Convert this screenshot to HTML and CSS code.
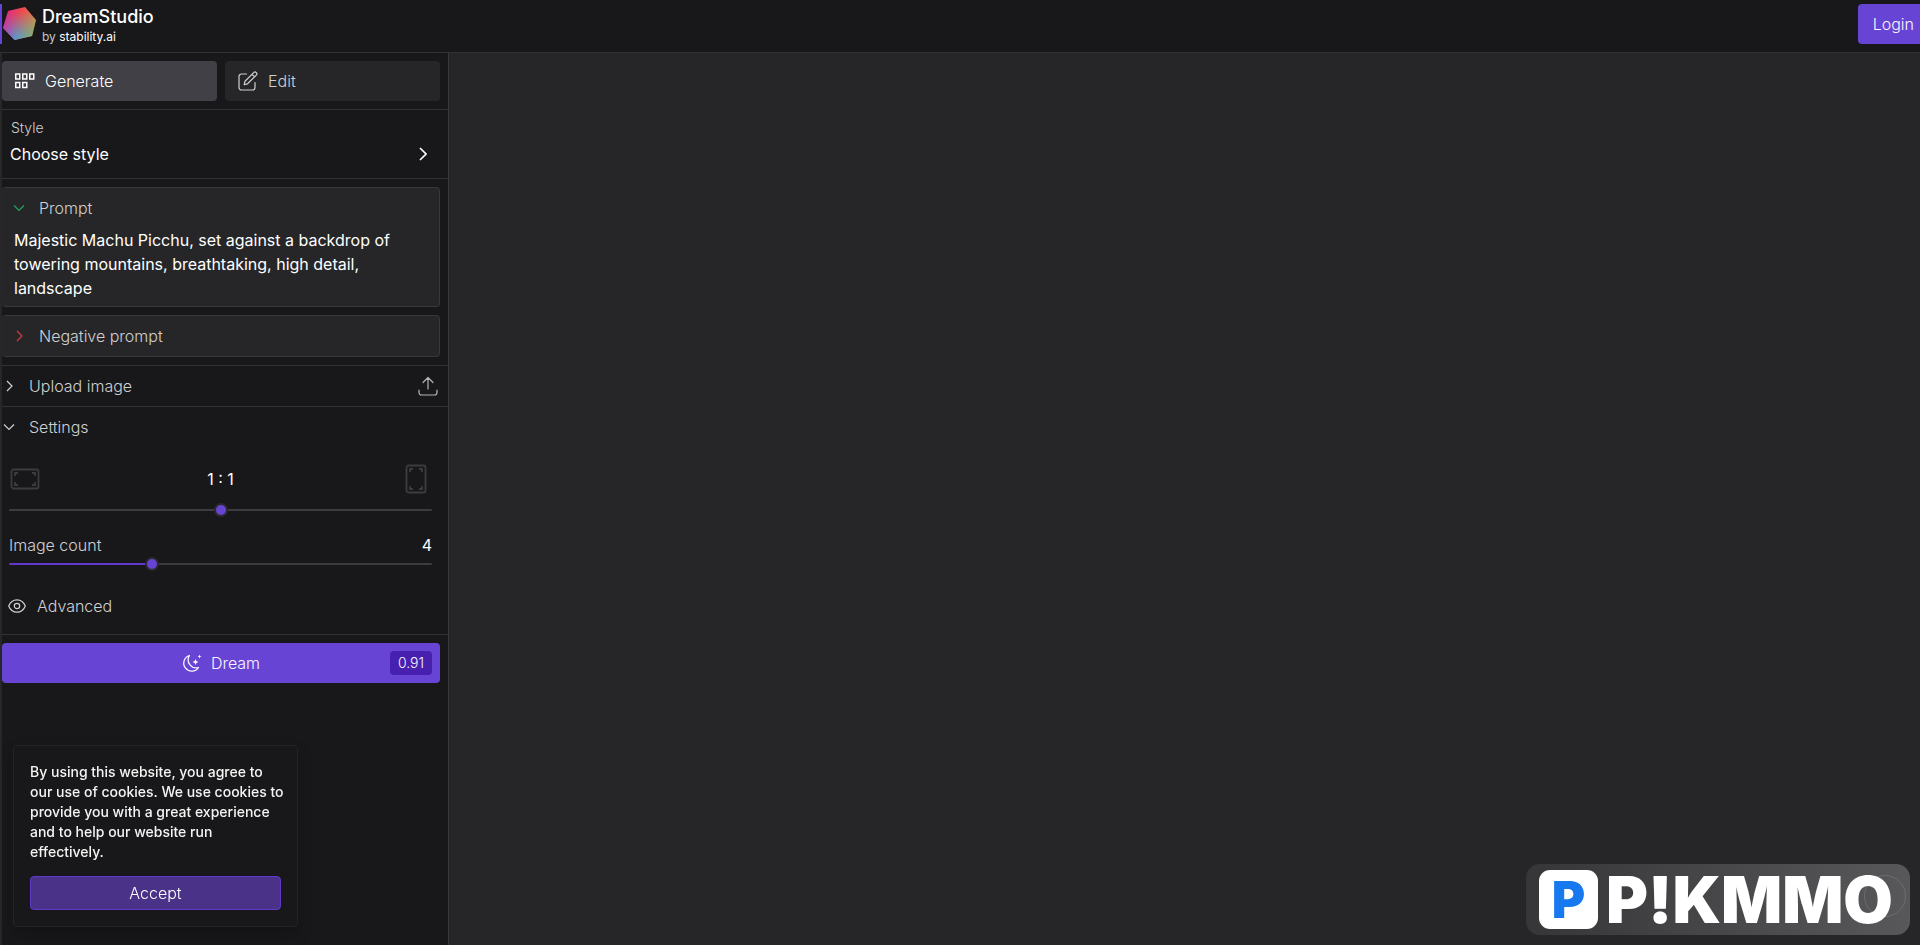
FILE: index.html
```html
<!doctype html>
<html lang="en">
  <head>
    <meta charset="UTF-8" />
    <meta name="viewport" content="width=device-width, initial-scale=1.0" />
    <title>DreamStudio</title>
    <link rel="stylesheet" href="styles.css">
  </head>
  <body>
    <header class="topbar">
      <span class="topbar-accent"></span>
      <a class="brand" href="#">
        <svg class="brand-logo" viewBox="0 0 34 34" aria-hidden="true">
          <defs>
            <linearGradient id="warm" x1="0" y1="0.2" x2="1" y2="0.5">
              <stop offset="0" stop-color="#d8288c" />
              <stop offset="0.5" stop-color="#ee4a4e" />
              <stop offset="1" stop-color="#d9884a" />
            </linearGradient>
            <linearGradient id="cool" x1="0" y1="0.6" x2="1" y2="0.7">
              <stop offset="0" stop-color="#9a48d8" />
              <stop offset="0.4" stop-color="#5c94cc" />
              <stop offset="1" stop-color="#86b264" />
            </linearGradient>
            <linearGradient id="fade" x1="0.45" y1="0" x2="0.55" y2="1">
              <stop offset="0.15" stop-color="#fff" stop-opacity="0" />
              <stop offset="0.9" stop-color="#fff" />
            </linearGradient>
            <mask id="lower">
              <rect width="34" height="34" fill="url(#fade)" />
            </mask>
          </defs>
          <path fill="url(#warm)" d="M6 4 23 0 34 13 30 29 12.500 33 1 21z" />
          <path fill="url(#cool)" mask="url(#lower)" d="M6 4 23 0 34 13 30 29 12.500 33 1 21z" />
        </svg>
        <span class="brand-text">
          <span class="brand-name">DreamStudio</span>
          <span class="brand-by">by <b>stability.ai</b></span>
        </span>
      </a>
      <button class="login" type="button">Login</button>
    </header>

    <div class="layout">
      <aside class="sidebar">
        <nav class="tabs">
          <button class="tab active" type="button">
            <svg width="20" height="16" viewBox="0 0 20 16" fill="none" stroke="currentColor" stroke-width="1.500">
              <rect x="0.750" y="1" width="4" height="5" />
              <rect x="7.750" y="1" width="4" height="5" />
              <rect x="14.750" y="1" width="4" height="5" />
              <rect x="0.750" y="9.500" width="4" height="5" />
              <rect x="7.750" y="9.500" width="4" height="5" />
            </svg>
            Generate
          </button>
          <button class="tab" type="button">
            <svg width="20" height="20" viewBox="0 0 20 20" fill="none" stroke="currentColor" stroke-width="1.200" stroke-linecap="round" stroke-linejoin="round">
              <path d="M8.500 3H3.500A2.500 2.500 0 0 0 1 5.500v11A2.500 2.500 0 0 0 3.500 19h11a2.500 2.500 0 0 0 2.500-2.500v-5" />
              <path d="M7 10.200 15.700 1.600a1.700 1.700 0 0 1 2.600 2.600L9.500 12.800 6.200 13.700zM14 3.300l2.600 2.600" />
            </svg>
            Edit
          </button>
        </nav>

        <button class="style-picker" type="button">
          <span class="style-label">Style</span>
          <span class="style-value">Choose style
            <svg width="8" height="14" viewBox="0 0 8 14" fill="none" stroke="currentColor" stroke-width="1.600"><path d="M1 1l6 6-6 6" /></svg>
          </span>
        </button>

        <section class="prompts">
          <div class="card">
            <button class="card-head" type="button">
              <svg class="green" width="12" height="12" viewBox="0 0 12 12" fill="none" stroke="currentColor" stroke-width="1.200"><path d="M1 3.500l5 5 5-5" /></svg>
              <span id="prompt-label">Prompt</span>
            </button>
            <textarea rows="3" aria-labelledby="prompt-label">Majestic Machu Picchu, set against a backdrop of towering mountains, breathtaking, high detail, landscape</textarea>
          </div>
          <div class="card">
            <button class="card-head" type="button">
              <svg class="red" width="12" height="12" viewBox="0 0 12 12" fill="none" stroke="currentColor" stroke-width="1.200"><path d="M4 1l5 5-5 5" /></svg>
              <span>Negative prompt</span>
            </button>
          </div>
        </section>

        <section class="row upload">
          <button class="row-toggle" type="button">
            <svg width="12" height="12" viewBox="0 0 12 12" fill="none" stroke="currentColor" stroke-width="1.200"><path d="M4 1l5 5-5 5" /></svg>
            Upload image
          </button>
          <button class="icon-button" type="button" aria-label="Upload">
            <svg width="20" height="20" viewBox="0 0 20 20" fill="none" stroke="currentColor" stroke-width="1.200" stroke-linecap="round" stroke-linejoin="round">
              <path d="M10 13V1.500M5 6.500l5-5 5 5M1 14v2.500A2.500 2.500 0 0 0 3.500 19h13a2.500 2.500 0 0 0 2.500-2.500V14" />
            </svg>
          </button>
        </section>

        <section class="settings">
          <button class="row-toggle" type="button">
            <svg width="12" height="12" viewBox="0 0 12 12" fill="none" stroke="currentColor" stroke-width="1.200"><path d="M1 3.500l5 5 5-5" /></svg>
            Settings
          </button>

          <div class="ratio">
            <div class="ratio-head">
              <svg width="30" height="22" viewBox="0 0 30 22" fill="none" stroke="currentColor" stroke-width="1.800">
                <rect x="1.500" y="1.500" width="27" height="19" rx="2" />
                <path d="M5 8V5h3M22 5h3v3M25 14v3h-3M8 17H5v-3" />
              </svg>
              <label for="ratio">1 : 1</label>
              <svg width="22" height="30" viewBox="0 0 22 30" fill="none" stroke="currentColor" stroke-width="1.800">
                <rect x="1.500" y="1.500" width="19" height="27" rx="2" />
                <path d="M5 8V5h3M14 5h3v3M17 22v3h-3M8 25H5v-3" />
              </svg>
            </div>
            <input type="range" id="ratio" min="0" max="10" value="5" />
          </div>

          <div class="count">
            <div class="count-head">
              <label for="count">Image count</label>
              <output for="count">4</output>
            </div>
            <input type="range" id="count" min="1" max="10" value="4" style="--fill: 33%" />
          </div>

          <button class="advanced" type="button">
            <svg width="18" height="14" viewBox="0 0 18 14" fill="none" stroke="currentColor" stroke-width="1.200">
              <path d="M0.700 7C2.300 3 5.300 0.800 9 0.800S15.700 3 17.300 7C15.700 11 12.700 13.200 9 13.200S2.300 11 0.700 7z" />
              <circle cx="9" cy="7" r="2.700" />
            </svg>
            Advanced
          </button>
        </section>

        <div class="submit">
          <button class="dream" type="button">
            <svg width="20" height="18" viewBox="0 0 20 18" fill="none" stroke="currentColor" stroke-width="1.300" stroke-linejoin="round">
              <path d="M7.500 1.500A8 8 0 1 0 16.500 13.500 8 8 0 0 1 7.500 1.500z" />
              <path fill="currentColor" stroke="none" d="M13.500 5l.9 2.100 2.100.9-2.100.9-.9 2.100-.9-2.100-2.100-.9 2.100-.9zM17.500 0.500l.6 1.400 1.400.6-1.400.6-.6 1.400-.6-1.400-1.400-.6 1.400-.6z" />
            </svg>
            Dream
            <span class="cost">0.91</span>
          </button>
        </div>
      </aside>

      <main class="canvas"></main>
    </div>

    <div class="cookies" role="dialog" aria-label="Cookies">
      <p>By using this website, you agree to our use of cookies. We use cookies to provide you with a great experience and to help our website run effectively.</p>
      <button type="button">Accept</button>
    </div>

    <div class="watermark">
      <span class="watermark-icon">P</span>
      <span class="watermark-name">P!KMMO</span>
    </div>
  </body>
</html>
```
FILE: styles.css
```css
* {
  box-sizing: border-box;
}
body {
  margin: 0;
  min-height: 100vh;
  display: flex;
  flex-direction: column;
  background-color: #18181a;
  color: #fff;
  font-family: Inter, "Liberation Sans", sans-serif;
  font-size: 16px;
  line-height: 24px;
}
button {
  margin: 0;
  padding: 0;
  border: none;
  background: none;
  color: #d0d0d2;
  font: inherit;
  font-weight: 300;
  text-align: left;
  cursor: pointer;
}
svg {
  display: block;
  flex-shrink: 0;
}

/* top bar */
.topbar {
  display: flex;
  align-items: center;
  height: 53px;
  padding-bottom: 4px;
  border-bottom: 1px solid #323236;
}
.topbar-accent {
  width: 2px;
  height: 40px;
  background-color: #6844d4;
}
.brand {
  display: flex;
  align-items: center;
  gap: 6px;
  color: #fff;
  text-decoration: none;
}
.brand-logo {
  width: 34px;
  height: 34px;
}
.brand-text {
  display: flex;
  flex-direction: column;
  padding-top: 4px;
}
.brand-name {
  font-size: 18px;
  font-weight: 500;
  line-height: 22px;
}
.brand-by {
  color: #c4c4c6;
  font-size: 12px;
  line-height: 18px;
}
.brand-by b {
  color: #fff;
  font-weight: 400;
}
.login {
  height: 40px;
  margin-left: auto;
  padding: 0 6px 0 15px;
  border-radius: 4px 0 0 4px;
  background-color: #6844d4;
  color: #f8f4ff;
}

/* sidebar */
.layout {
  flex: 1;
  display: flex;
  border-left: 2px solid #27272a;
}
.sidebar {
  width: 447px;
  border-right: 1px solid #38383c;
}
.canvas {
  flex: 1;
  background-color: #262628;
}
.tabs {
  display: grid;
  grid-template-columns: 1fr 1fr;
  gap: 8px;
  padding: 8px 8px 8px 0;
  border-bottom: 1px solid #323236;
}
.tab {
  display: flex;
  align-items: center;
  gap: 10px;
  height: 40px;
  padding: 0 13px;
  border-radius: 4px;
  background-color: #262628;
}
.tab.active {
  background-color: #404046;
  color: #fff;
}
.style-picker {
  display: block;
  width: 100%;
  padding: 6px 21px 12px 8px;
  border-bottom: 1px solid #323236;
}
.style-label {
  display: block;
  padding-left: 1px;
  font-size: 14px;
}
.style-value {
  display: flex;
  align-items: center;
  justify-content: space-between;
  padding-top: 2px;
  color: #fff;
  font-weight: 400;
}
.prompts {
  display: flex;
  flex-direction: column;
  gap: 8px;
  padding: 8px 8px 8px 0;
  border-bottom: 1px solid #323236;
}
.card {
  border: 1px solid #38383c;
  border-left: none;
  border-radius: 4px;
  background-color: #262628;
}
.card-head {
  display: flex;
  align-items: center;
  gap: 14px;
  width: 100%;
  height: 40px;
  padding: 0 11px;
}
.green {
  color: #22a45c;
}
.red {
  color: #d8383c;
}
textarea {
  display: block;
  width: 100%;
  height: 78px;
  padding: 0 48px 0 12px;
  border: none;
  outline: none;
  resize: none;
  overflow: hidden;
  background: none;
  color: #fff;
  font: inherit;
}
.row {
  display: flex;
  align-items: center;
  justify-content: space-between;
  height: 41px;
  padding-right: 10px;
  border-bottom: 1px solid #323236;
}
.row-toggle {
  display: flex;
  align-items: center;
  gap: 14px;
  height: 40px;
  padding-left: 1px;
}
.icon-button {
  color: #b4b4b8;
}

/* settings */
.settings {
  padding-bottom: 16px;
  border-bottom: 1px solid #323236;
}
.ratio,
.count {
  padding: 0 16px 0 7px;
}
.ratio {
  padding-top: 16px;
}
.ratio-head {
  display: grid;
  grid-template-columns: 30px 1fr 30px;
  align-items: center;
  justify-items: center;
  height: 32px;
  margin-bottom: 8px;
  padding: 0 1px;
  color: #3c3c40;
}
.ratio-head label {
  color: #fff;
}
.count {
  padding-top: 16px;
}
.count-head {
  display: flex;
  justify-content: space-between;
}
.count-head label {
  color: #d0d0d2;
  font-weight: 300;
}
input[type='range'] {
  --fill: 0%;
  display: block;
  width: 100%;
  height: 14px;
  margin: 0;
  appearance: none;
  background: none;
  cursor: pointer;
}
input[type='range']::-webkit-slider-runnable-track {
  height: 2px;
  border-radius: 1px;
  background: linear-gradient(to right, #6038cc var(--fill), #3c3c40 var(--fill));
}
input[type='range']::-webkit-slider-thumb {
  appearance: none;
  width: 14px;
  height: 14px;
  margin-top: -6px;
  border: 2px solid #2a2a2e;
  border-radius: 50%;
  background-color: #6844d4;
}
.advanced {
  display: flex;
  align-items: center;
  gap: 11px;
  margin-top: 23px;
  padding-left: 6px;
}

/* dream */
.submit {
  padding: 8px 8px 8px 0;
}
.dream {
  position: relative;
  display: flex;
  align-items: center;
  justify-content: center;
  gap: 9px;
  width: 100%;
  height: 40px;
  border-radius: 4px;
  background-color: #6844d4;
  color: #f8f4ff;
}
.cost {
  position: absolute;
  right: 8px;
  padding: 0 8px;
  border-radius: 4px;
  background-color: #4820b0;
  font-size: 14px;
}

/* cookies */
.cookies {
  position: fixed;
  left: 13px;
  bottom: 18px;
  width: 285px;
  padding: 16px;
  border: 1px solid #242428;
  border-radius: 4px;
  background-color: #18181a;
  box-shadow: 0 8px 16px rgba(0, 0, 0, 0.2);
}
.cookies p {
  margin: 0 -4px 14px 0;
  color: #f4f4f4;
  font-size: 14px;
  font-weight: 500;
  line-height: 20px;
}
.cookies button {
  width: 100%;
  height: 34px;
  border: 1px solid #6038cc;
  border-radius: 4px;
  background-color: #4a3288;
  color: #fff;
  text-align: center;
}

/* watermark */
.watermark {
  position: fixed;
  right: 10px;
  bottom: 10px;
  display: flex;
  align-items: center;
  gap: 8px;
  width: 384px;
  height: 71px;
  padding: 0 13px;
  border-radius: 14px;
  background: linear-gradient(to right, #363638, #58585a);
  font-weight: 900;
}
.watermark::before {
  content: "";
  position: absolute;
  top: 11px;
  right: 4px;
  width: 40px;
  height: 40px;
  border: 1px solid #6c6c6e;
  border-radius: 50%;
}
.watermark-icon {
  width: 59px;
  height: 59px;
  border-radius: 11px;
  background-color: #fff;
  color: #1878f0;
  font-size: 51px;
  line-height: 59px;
  text-align: center;
}
.watermark-name {
  position: relative;
  font-size: 64px;
  line-height: 64px;
}
```
